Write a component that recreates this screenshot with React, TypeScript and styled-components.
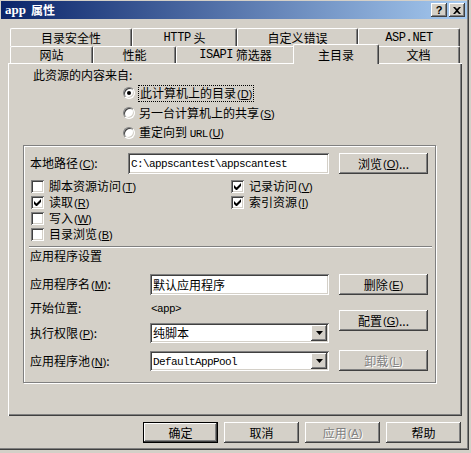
import styled, { createGlobalStyle, css } from 'styled-components';
import type { ReactNode } from 'react';

const GlobalStyle = createGlobalStyle`
  html, body {
    margin: 0;
    padding: 0;
    background: #d4d0c8;
  }
  body {
    font-family: "Noto Sans CJK SC", "Liberation Sans", sans-serif;
    font-size: 12px;
    line-height: 14px;
    color: #000;
  }
  * { box-sizing: border-box; }
`;

const raised = css`
  box-shadow: inset -1px -1px 0 #404040, inset 1px 1px 0 #ffffff,
    inset -2px -2px 0 #808080, inset 2px 2px 0 #d4d0c8;
`;

const sunken = css`
  box-shadow: inset 1px 1px 0 #808080, inset -1px -1px 0 #ffffff,
    inset 2px 2px 0 #404040, inset -2px -2px 0 #d4d0c8;
`;

const Window = styled.div`
  width: 469px;
  height: 450px;
  padding: 1px 2px 2px 1px;
  display: flex;
  flex-direction: column;
  background: #d4d0c8;
  box-shadow: inset -1px -1px 0 #404040, inset -2px -2px 0 #808080;
`;

const TitleBar = styled.div`
  height: 18px;
  display: flex;
  align-items: center;
  padding: 0 2px 0 4px;
  background: linear-gradient(90deg, #0a246a 0%, #a6caf0 100%);
  color: #fff;
  font-weight: bold;
`;

const Title = styled.div`
  flex: 1;
  display: flex;
  align-items: center;
  gap: 5px;
`;

const TitleMono = styled.span`
  font-family: "Liberation Serif", serif;
  font-size: 13px;
  font-weight: bold;
`;

const CaptionButtons = styled.div`
  display: flex;
  gap: 2px;
`;

const CaptionButton = styled.div`
  width: 16px;
  height: 14px;
  display: grid;
  place-items: center;
  background: #d4d0c8;
  color: #000;
  ${raised};
`;

const HelpGlyph = styled.span`
  font-family: "Liberation Sans", sans-serif;
  font-size: 11px;
  font-weight: bold;
  line-height: 10px;
`;

const TabStrip = styled.div`
  margin: 9px 0 0 9px;
  display: flex;
  flex-direction: column;
`;

const TabRow = styled.div<{ $h: number }>`
  display: flex;
  height: ${p => p.$h}px;
`;

const Tab = styled.div<{ $w: number; $active?: boolean }>`
  position: relative;
  width: ${p => p.$w}px;
  height: 100%;
  display: flex;
  align-items: center;
  justify-content: center;
  white-space: nowrap;
  background: #d4d0c8;
  border-top: 1px solid #fff;
  border-left: 1px solid #fff;
  border-right: 1px solid #404040;
  border-radius: 2px 2px 0 0;
  box-shadow: inset -1px 0 0 #808080;
  ${p =>
    p.$active &&
    css`
      width: ${p.$w + 4}px;
      height: calc(100% + 3px);
      margin: -2px -2px 0;
      z-index: 2;
    `}
`;

const Mono = styled.span<{ $big?: boolean }>`
  font-family: "Liberation Mono", monospace;
  font-size: ${p => (p.$big ? 12 : 11)}px;
  letter-spacing: ${p => (p.$big ? -0.4 : -0.6)}px;
`;

const HotKey = styled.span`
  font-family: "Liberation Sans", sans-serif;
  font-size: 11px;
  margin-left: 1px;
`;

const Hot = ({ k }: { k: string }) => (
  <HotKey>
    (<u>{k}</u>)
  </HotKey>
);

const Panel = styled.div`
  margin-left: 7px;
  width: 454px;
  height: 353px;
  padding-top: 4px;
  display: flex;
  flex-direction: column;
  box-shadow: inset 1px 1px 0 #fff, inset -1px -1px 0 #404040,
    inset -2px -2px 0 #808080;
`;

const SourceLabel = styled.div`
  margin-left: 25px;
  line-height: 16px;
`;

const RadioList = styled.div`
  margin-left: 115px;
  display: flex;
  flex-direction: column;
`;

const RadioRow = styled.div`
  height: 20px;
  display: flex;
  align-items: center;
  gap: 4px;
`;

const Radio = styled.span<{ $checked?: boolean }>`
  position: relative;
  width: 12px;
  height: 12px;
  border-radius: 50%;
  background: #fff;
  border: 1px solid;
  border-color: #808080 #fff #fff #808080;
  box-shadow: inset 1px 1px 0 #404040, inset -1px -1px 0 #d4d0c8;
  ${p =>
    p.$checked &&
    css`
      &::after {
        content: '';
        position: absolute;
        left: 3px;
        top: 3px;
        width: 4px;
        height: 4px;
        border-radius: 50%;
        background: #000;
      }
    `}
`;

const Focus = styled.span`
  outline: 1px dotted #000;
  padding: 0 1px;
`;

const GroupBox = styled.div`
  margin: 2px 0 0 15px;
  width: 413px;
  height: 238px;
  padding: 7px 6px 0 6px;
  border: 1px solid #808080;
  box-shadow: inset 1px 1px 0 #fff, 1px 1px 0 #fff;
  display: flex;
  flex-direction: column;
`;

const PathRow = styled.div`
  height: 21px;
  display: flex;
  align-items: center;
`;

const FieldLabel = styled.div<{ $w: number }>`
  width: ${p => p.$w}px;
  white-space: nowrap;
`;

const TextBox = styled.div<{ $w: number }>`
  width: ${p => p.$w}px;
  height: 100%;
  display: flex;
  align-items: center;
  padding: 0 3px;
  background: #fff;
  white-space: nowrap;
  overflow: hidden;
  ${sunken};
`;

const Button = styled.div<{ $w: number; $h?: number; $mt?: number; $ml?: number; $default?: boolean; $disabled?: boolean }>`
  width: ${p => p.$w}px;
  height: ${p => p.$h ?? 21}px;
  margin-top: ${p => p.$mt ?? 0}px;
  margin-left: ${p => p.$ml ?? 0}px;
  flex-shrink: 0;
  display: flex;
  align-items: center;
  justify-content: center;
  white-space: nowrap;
  background: #d4d0c8;
  ${raised};
  ${p =>
    p.$default &&
    css`
      box-shadow: inset 0 0 0 1px #000, inset -2px -2px 0 #404040,
        inset 2px 2px 0 #fff, inset -3px -3px 0 #808080;
    `}
  ${p =>
    p.$disabled &&
    css`
      color: #808080;
      text-shadow: 1px 1px 0 #fff;
    `}
`;

const CheckGrid = styled.div`
  margin-top: 4px;
  display: grid;
  grid-template-columns: 200px 1fr;
  grid-auto-rows: 16px;
`;

const CheckItem = styled.div`
  display: flex;
  align-items: center;
  gap: 5px;
  padding-left: 1px;
`;

const CheckBox = styled.span`
  width: 13px;
  height: 13px;
  display: grid;
  place-items: center;
  background: #fff;
  ${sunken};
`;

const Separator = styled.div`
  margin: 4px -3px 0 -1px;
  height: 2px;
  border-top: 1px solid #808080;
  border-bottom: 1px solid #fff;
`;

const SectionTitle = styled.div`
  line-height: 16px;
`;

const AppSection = styled.div`
  display: flex;
  gap: 10px;
`;

const AppFields = styled.div`
  width: 299px;
  display: flex;
  flex-direction: column;
`;

const AppRow = styled.div<{ $mt: number; $h: number }>`
  margin-top: ${p => p.$mt}px;
  height: ${p => p.$h}px;
  display: grid;
  grid-template-columns: 120px 179px;
  align-items: center;
`;

const StartValue = styled.span`
  padding-left: 1px;
`;

const Select = styled.div`
  height: 100%;
  display: flex;
  align-items: center;
  padding: 2px 2px 2px 3px;
  background: #fff;
  ${sunken};
`;

const SelectText = styled.span`
  flex: 1;
  white-space: nowrap;
`;

const DropButton = styled.span`
  width: 16px;
  height: 16px;
  display: grid;
  place-items: center;
  background: #d4d0c8;
  ${raised};
`;

const ButtonColumn = styled.div`
  display: flex;
  flex-direction: column;
`;

const ButtonBar = styled.div`
  margin-top: 6px;
  padding-right: 6px;
  display: flex;
  justify-content: flex-end;
  gap: 6px;
`;

const Check = () => (
  <svg width="7" height="7" viewBox="0 0 7 7">
    <path d="M0 2 L2.5 4.5 L7 0 L7 3 L2.5 7.5 L0 5 Z" fill="#000" />
  </svg>
);

const Arrow = () => (
  <svg width="7" height="4" viewBox="0 0 7 4">
    <path d="M0 0 H7 L3.5 4 Z" fill="#000" />
  </svg>
);

const tabsTop: [ReactNode, number][] = [
  ['目录安全性', 122],
  [<><Mono $big>HTTP</Mono>&nbsp;头</>, 105],
  ['自定义错误', 121],
  [<Mono $big>ASP.NET</Mono>, 102],
];

const tabsBottom: [ReactNode, number, boolean?][] = [
  ['网站', 83],
  ['性能', 83],
  [<><Mono $big>ISAPI</Mono>&nbsp;筛选器</>, 119],
  ['主目录', 82, true],
  ['文档', 83],
];

const checks: [string, string, boolean][] = [
  ['脚本资源访问', 'T', false],
  ['记录访问', 'V', true],
  ['读取', 'R', true],
  ['索引资源', 'I', true],
  ['写入', 'W', false],
  ['', '', false],
  ['目录浏览', 'B', false],
];

export default function App() {
  return (
    <>
      <GlobalStyle />
      <Window>
        <TitleBar>
          <Title>
            <TitleMono>app</TitleMono>
            <span>属性</span>
          </Title>
          <CaptionButtons>
            <CaptionButton>
              <HelpGlyph>?</HelpGlyph>
            </CaptionButton>
            <CaptionButton>
              <svg width="8" height="7" viewBox="0 0 8 7">
                <path d="M0 0h2l2 2 2-2h2L5 3.5 8 7H6L4 5 2 7H0l3-3.5z" fill="#000" />
              </svg>
            </CaptionButton>
          </CaptionButtons>
        </TitleBar>

        <TabStrip>
          <TabRow $h={18}>
            {tabsTop.map(([label, w], i) => (
              <Tab key={i} $w={w}>{label}</Tab>
            ))}
          </TabRow>
          <TabRow $h={17}>
            {tabsBottom.map(([label, w, active], i) => (
              <Tab key={i} $w={w} $active={active}>{label}</Tab>
            ))}
          </TabRow>
        </TabStrip>

        <Panel>
          <SourceLabel>此资源的内容来自:</SourceLabel>
          <RadioList>
            <RadioRow>
              <Radio $checked />
              <Focus>此计算机上的目录<Hot k="D" /></Focus>
            </RadioRow>
            <RadioRow>
              <Radio />
              <span>另一台计算机上的共享<Hot k="S" /></span>
            </RadioRow>
            <RadioRow>
              <Radio />
              <span>重定向到 <Mono>URL</Mono><Hot k="U" /></span>
            </RadioRow>
          </RadioList>

          <GroupBox>
            <PathRow>
              <FieldLabel $w={98}>本地路径<Hot k="C" />:</FieldLabel>
              <TextBox $w={201}><Mono>C:\appscantest\appscantest</Mono></TextBox>
              <Button $w={89} $ml={10}>浏览<Hot k="O" />...</Button>
            </PathRow>

            <CheckGrid>
              {checks.map(([label, k, on], i) =>
                label ? (
                  <CheckItem key={i}>
                    <CheckBox>{on && <Check />}</CheckBox>
                    <span>{label}<Hot k={k} /></span>
                  </CheckItem>
                ) : (
                  <span key={i} />
                )
              )}
            </CheckGrid>

            <Separator />
            <SectionTitle>应用程序设置</SectionTitle>

            <AppSection>
              <AppFields>
                <AppRow $mt={10} $h={21}>
                  <FieldLabel $w={120}>应用程序名<Hot k="M" />:</FieldLabel>
                  <TextBox $w={179}>默认应用程序</TextBox>
                </AppRow>
                <AppRow $mt={5} $h={16}>
                  <FieldLabel $w={120}>开始位置:</FieldLabel>
                  <StartValue><Mono>&lt;app&gt;</Mono></StartValue>
                </AppRow>
                <AppRow $mt={7} $h={20}>
                  <FieldLabel $w={120}>执行权限<Hot k="P" />:</FieldLabel>
                  <Select>
                    <SelectText>纯脚本</SelectText>
                    <DropButton><Arrow /></DropButton>
                  </Select>
                </AppRow>
                <AppRow $mt={8} $h={20}>
                  <FieldLabel $w={120}>应用程序池<Hot k="N" />:</FieldLabel>
                  <Select>
                    <SelectText><Mono>DefaultAppPool</Mono></SelectText>
                    <DropButton><Arrow /></DropButton>
                  </Select>
                </AppRow>
              </AppFields>
              <ButtonColumn>
                <Button $w={89} $mt={10}>删除<Hot k="E" /></Button>
                <Button $w={89} $mt={15}>配置<Hot k="G" />...</Button>
                <Button $w={89} $mt={19} $disabled>卸载<Hot k="L" /></Button>
              </ButtonColumn>
            </AppSection>
          </GroupBox>
        </Panel>

        <ButtonBar>
          <Button $w={75} $default>确定</Button>
          <Button $w={75}>取消</Button>
          <Button $w={75} $disabled>应用<Hot k="A" /></Button>
          <Button $w={75}>帮助</Button>
        </ButtonBar>
      </Window>
    </>
  );
}
